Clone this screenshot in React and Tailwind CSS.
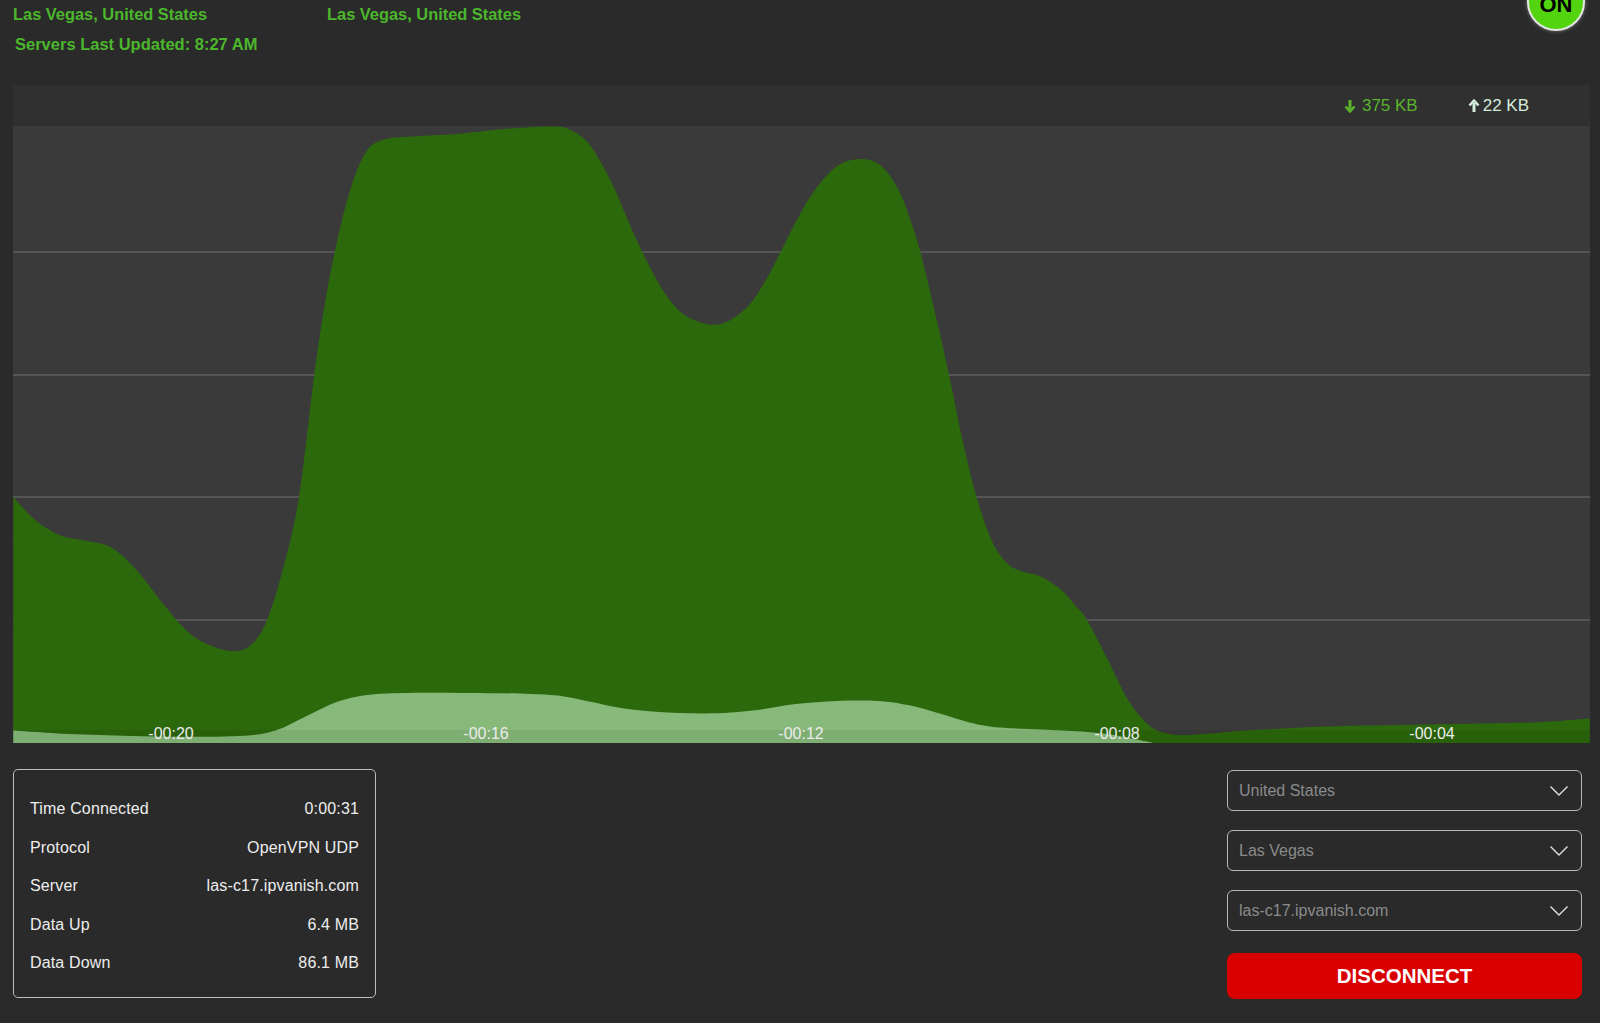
import React from 'react';

// shrunk-screenshot coords -> plot coords
const S = 1600 / 1568;
const toPlot = ([x, y]) => [x * S - 13, y * S - 126];

const downPts = [
  [13, 487], [35, 510], [60, 525], [85, 530], [110, 537], [135, 560], [160, 592], [185, 620],
  [210, 634], [232, 638], [248, 630], [262, 607], [278, 555], [293, 487], [308, 367], [318, 300],
  [328, 247], [342, 190], [358, 150], [375, 137], [400, 134], [450, 131], [500, 126], [540, 124],
  [558, 127], [578, 142], [600, 180], [615, 215], [630, 248], [650, 285], [670, 308], [695, 318],
  [715, 314], [735, 298], [752, 272], [765, 247], [785, 208], [805, 178], [825, 160], [848, 156],
  [865, 164], [880, 185], [892, 215], [902, 247], [916, 305], [930, 367], [943, 430], [957, 487],
  [972, 530], [987, 552], [1002, 560], [1020, 565], [1040, 578], [1055, 595], [1065, 607],
  [1085, 645], [1105, 685], [1125, 710], [1145, 719], [1170, 720], [1220, 716], [1300, 712],
  [1400, 710], [1500, 708], [1558, 704],
].map(toPlot);

const upPts = [
  [13, 716], [60, 719], [120, 721], [180, 722], [240, 721], [270, 716], [300, 702], [330, 688],
  [360, 681], [400, 679], [460, 679], [520, 680], [550, 682], [580, 688], [610, 694], [650, 698],
  [700, 699], [740, 696], [780, 690], [820, 687], [860, 687], [890, 691], [920, 699], [950, 708],
  [980, 713], [1020, 715], [1060, 717], [1090, 720], [1110, 724], [1130, 728],
].map(toPlot);

const W = 1577;
const H = 617;

function areaPath(pts) {
  let d = `M${pts[0][0]},${H} L${pts[0][0]},${pts[0][1]}`;
  for (let i = 0; i < pts.length - 1; i++) {
    const p0 = pts[i - 1] || pts[i];
    const p1 = pts[i];
    const p2 = pts[i + 1];
    const p3 = pts[i + 2] || p2;
    const c1x = p1[0] + (p2[0] - p0[0]) / 6;
    const c1y = p1[1] + (p2[1] - p0[1]) / 6;
    const c2x = p2[0] - (p3[0] - p1[0]) / 6;
    const c2y = p2[1] - (p3[1] - p1[1]) / 6;
    d += ` C${c1x.toFixed(1)},${c1y.toFixed(1)} ${c2x.toFixed(1)},${c2y.toFixed(1)} ${p2[0].toFixed(1)},${p2[1].toFixed(1)}`;
  }
  d += ` L${pts[pts.length - 1][0]},${H} Z`;
  return d;
}

const gridY = [126, 249, 371, 494];
const axisLabels = [
  { t: '-00:20', x: 158 },
  { t: '-00:16', x: 473 },
  { t: '-00:12', x: 788 },
  { t: '-00:08', x: 1104 },
  { t: '-00:04', x: 1419 },
];

const stats = [
  ['Time Connected', '0:00:31'],
  ['Protocol', 'OpenVPN UDP'],
  ['Server', 'las-c17.ipvanish.com'],
  ['Data Up', '6.4 MB'],
  ['Data Down', '86.1 MB'],
];

function Arrow({ up, className }) {
  return (
    <svg viewBox="0 0 12 14" className={className} fill="none" stroke="currentColor">
      {up ? (
        <>
          <path d="M6 13V4" strokeWidth="3" />
          <path d="M1.5 6.5L6 1.5l4.5 5" strokeWidth="2.6" strokeLinejoin="round" />
        </>
      ) : (
        <>
          <path d="M6 1v9" strokeWidth="3" />
          <path d="M1.5 7.5L6 12.5l4.5-5" strokeWidth="2.6" strokeLinejoin="round" />
        </>
      )}
    </svg>
  );
}

function Select({ value }) {
  return (
    <div className="h-[41px] rounded-[6px] border border-[#b8b8b8] flex items-center justify-between pl-[11px] pr-[13px]">
      <span className="text-[16px] text-[#8a8a8a]">{value}</span>
      <svg viewBox="0 0 18 10" className="w-[18px] h-[10px]" fill="none" stroke="#e0e0e0" strokeWidth="1.4">
        <path d="M0.5 0.5L9 9l8.5-8.5" />
      </svg>
    </div>
  );
}

export default function App() {
  return (
    <div
      className="relative w-[1600px] h-[1023px] overflow-hidden bg-[#2a2a2a]"
      style={{ fontFamily: '"Liberation Sans", Arial, sans-serif' }}
    >
      {/* header */}
      <div className="h-[85px] pl-[13px]">
        <div className="flex h-[28px] items-center">
          <span className="w-[314px] text-[16.4px] font-bold text-[#4cb62c]">Las Vegas, United States</span>
          <span className="text-[16.4px] font-bold text-[#4cb62c]">Las Vegas, United States</span>
        </div>
        <div className="pl-[2px] mt-[2px] text-[16.5px] font-bold text-[#4cb62c] leading-[28px]">
          Servers Last Updated: 8:27 AM
        </div>
      </div>

      <div className="absolute left-[1527px] top-[-27px] w-[58px] h-[58px] rounded-full bg-[#52d40e] border-2 border-[#e4e4e4] shadow-[0_0_4px_rgba(255,255,255,0.35)] flex items-center justify-center">
        <span className="text-[22px] font-bold text-black leading-none pt-[5px]">ON</span>
      </div>

      {/* chart */}
      <div className="ml-[13px] w-[1577px]">
        <div className="h-[41px] bg-[#303030] flex items-center justify-end pr-[61px] gap-[50px]">
          <div className="flex items-center gap-[6px] text-[#5ab52b]">
            <Arrow className="w-[12px] h-[14px]" />
            <span className="text-[17px]">375 KB</span>
          </div>
          <div className="flex items-center gap-[3px] text-[#d5ecdd]">
            <Arrow up className="w-[12px] h-[14px]" />
            <span className="text-[17px]">22 KB</span>
          </div>
        </div>
        <div className="relative h-[617px] bg-[#3a3a3a]">
          <svg viewBox={`0 0 ${W} ${H}`} className="block w-[1577px] h-[617px]">
            {gridY.map((y) => (
              <rect key={y} x="0" y={y - 1} width={W} height="2" fill="#555555" />
            ))}
            <path d={areaPath(downPts)} fill="#2c6a0a" fillOpacity="0.96" />
            <path d={areaPath(upPts)} fill="#87b97b" />
            <rect x="0" y="604" width={W} height="13" fill="#000" fillOpacity="0.06" />
          </svg>
          {axisLabels.map((l) => (
            <span
              key={l.t}
              className="absolute top-[599px] -translate-x-1/2 text-[16px] leading-[18px] text-[#ececec]"
              style={{ left: l.x }}
            >
              {l.t}
            </span>
          ))}
        </div>
      </div>

      {/* bottom */}
      <div className="flex justify-between pl-[13px] pr-[18px] mt-[26px]">
        <div className="w-[363px] h-[229px] rounded-[5px] border-[1.5px] border-[#bdbdbd] px-[16px] pt-[20px]">
          {stats.map(([k, v]) => (
            <div key={k} className="h-[38.5px] flex items-center justify-between text-[16px] tracking-[0.15px] text-[#ededed]">
              <span>{k}</span>
              <span>{v}</span>
            </div>
          ))}
        </div>
        <div className="w-[355px] mt-[1px] flex flex-col">
          <Select value="United States" />
          <div className="h-[19px]" />
          <Select value="Las Vegas" />
          <div className="h-[19px]" />
          <Select value="las-c17.ipvanish.com" />
          <button className="mt-[22px] h-[46px] rounded-[8px] bg-[#d80000] text-white text-[20.5px] font-bold">
            DISCONNECT
          </button>
        </div>
      </div>
    </div>
  );
}
